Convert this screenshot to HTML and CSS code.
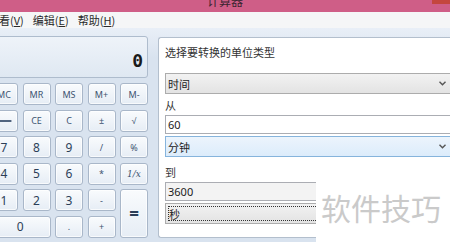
FILE: index.html
```html
<!DOCTYPE html>
<html lang="zh-CN">
<head>
  <meta charset="UTF-8" />
  <title>计算器</title>
  <link rel="stylesheet" href="styles.css">
</head>
<body>
  <div class="window">
    <div class="titlebar">
      <span class="title">计算器</span>
      <span class="close"></span>
    </div>

    <div class="menubar">
      <span class="menu-item">查看(<u>V</u>)</span>
      <span class="menu-item">编辑(<u>E</u>)</span>
      <span class="menu-item">帮助(<u>H</u>)</span>
    </div>

    <div class="main">
      <div class="calc">
        <div class="display"><span class="value">0</span></div>
        <div class="keys">
          <button class="key small">MC</button>
          <button class="key small">MR</button>
          <button class="key small">MS</button>
          <button class="key small">M+</button>
          <button class="key small">M-</button>

          <button class="key">
            <svg width="28" height="10" viewBox="0 0 28 10">
              <path d="M2 5 H22 M7 1.5 L2 5 L7 8.5" fill="none" stroke="#1d3557" stroke-width="1.6"/>
            </svg>
          </button>
          <button class="key small">CE</button>
          <button class="key small">C</button>
          <button class="key small">±</button>
          <button class="key small">√</button>

          <button class="key digit">7</button>
          <button class="key digit">8</button>
          <button class="key digit">9</button>
          <button class="key small">/</button>
          <button class="key small">%</button>

          <button class="key digit">4</button>
          <button class="key digit">5</button>
          <button class="key digit">6</button>
          <button class="key small">*</button>
          <button class="key small italic">1/x</button>

          <button class="key digit">1</button>
          <button class="key digit">2</button>
          <button class="key digit">3</button>
          <button class="key small">-</button>
          <button class="key equals">=</button>

          <button class="key digit zero">0</button>
          <button class="key small">.</button>
          <button class="key small">+</button>
        </div>
      </div>

      <div class="panel">
        <p class="panel-title">选择要转换的单位类型</p>
        <div class="select">
          <span>时间</span>
          <svg class="arrow" width="7" height="5" viewBox="0 0 7 5"><path d="M0.5 0.8 L3.5 3.8 L6.5 0.8" fill="none" stroke="#555" stroke-width="1.4"/></svg>
        </div>

        <div class="label from">从</div>
        <div class="input">60</div>
        <div class="select hover">
          <span>分钟</span>
          <svg class="arrow" width="7" height="5" viewBox="0 0 7 5"><path d="M0.5 0.8 L3.5 3.8 L6.5 0.8" fill="none" stroke="#555" stroke-width="1.4"/></svg>
        </div>

        <div class="label to">到</div>
        <div class="input readonly">3600</div>
        <div class="select focus">
          <span class="focus-ring">秒</span>
        </div>
      </div>
    </div>

    <div class="watermark">软件技巧</div>
  </div>
</body>
</html>
```

FILE: styles.css
```css
* {
  box-sizing: border-box;
}

body {
  margin: 0;
  width: 450px;
  height: 242px;
  overflow: hidden;
  font-family: "Noto Sans", "Noto Sans CJK SC", sans-serif;
  background: #dbe5f1;
}

.window {
  position: relative;
  height: 242px;
  overflow: hidden;
}

.titlebar {
  position: relative;
  height: 12px;
  background: #cf5e87;
  overflow: hidden;
  text-align: center;
}

.title {
  display: block;
  margin-top: -7px;
  font-family: "Noto Sans CJK SC", sans-serif;
  font-size: 12px;
  line-height: 16px;
  color: #3b2530;
}

.close {
  position: absolute;
  top: 0;
  right: 0;
  width: 18px;
  height: 4px;
  background: #c4463e;
}

.menubar {
  display: flex;
  gap: 9px;
  height: 16px;
  margin-left: -12px;
  background: #f5f6f7;
  font-family: "Noto Sans CJK SC", sans-serif;
  font-size: 11px;
  line-height: 16px;
  color: #2a2a2a;
}

.menu-item u {
  text-underline-offset: 1px;
}

.main {
  display: flex;
  align-items: flex-start;
  padding-top: 8px;
  height: 214px;
  background: linear-gradient(#e9eff7, #d9e3ef 30px);
}

.calc {
  width: 158px;
  margin-left: -10px;
  flex-shrink: 0;
}

.display {
  height: 42px;
  margin-bottom: 5px;
  border: 1px solid #aebccd;
  border-radius: 3px;
  background: linear-gradient(#eef3f9, #dfe8f2);
  display: flex;
  justify-content: flex-end;
  align-items: flex-end;
  padding: 0 4px 5px 0;
}

.value {
  font-family: "DejaVu Sans Mono", monospace;
  font-size: 18px;
  font-weight: bold;
  line-height: 22px;
  color: #1a1a1a;
}

.keys {
  display: grid;
  grid-template-columns: repeat(5, 28px);
  grid-auto-rows: 22px;
  column-gap: 4.5px;
  row-gap: 4.6px;
}

.key {
  display: flex;
  align-items: center;
  justify-content: center;
  margin: 0;
  padding: 0;
  border: 1px solid #a9b7c9;
  border-radius: 3px;
  background: linear-gradient(#f9fbfd, #e6edf5);
  box-shadow: inset 0 0 0 1px rgba(255, 255, 255, 0.7);
  font-family: "Noto Sans", sans-serif;
  color: #2c3f58;
  overflow: hidden;
}

.key.digit {
  font-size: 12px;
}

.key.small {
  font-size: 9px;
  color: #3d5370;
}

.key.italic {
  font-family: "DejaVu Serif", serif;
  font-style: italic;
}

.key.equals {
  grid-column: 5;
  grid-row: span 2;
  font-size: 17px;
  font-weight: bold;
}

.key.zero {
  grid-column: span 2;
}

.panel {
  flex-shrink: 0;
  width: 300px;
  height: 201px;
  margin: 1px 0 0 10px;
  padding: 8px 0 0 6px;
  background: #fff;
  border: 1px solid #b3bfcd;
  border-right: none;
  border-radius: 3px 0 0 3px;
  font-family: "Noto Sans", "Noto Sans CJK SC", sans-serif;
  font-size: 11px;
  color: #333;
}

.panel-title {
  margin: 0 0 14px;
  line-height: 13px;
}

.select {
  display: flex;
  justify-content: space-between;
  align-items: center;
  width: 286px;
  height: 21px;
  padding: 0 4px 0 2px;
  border: 1px solid #acacac;
  background: linear-gradient(#f2f2f2, #e3e3e3);
  color: #222;
}

.select.hover {
  margin-top: 2px;
  border-color: #86b4dc;
  background: linear-gradient(#ecf4fc, #dcecfb);
}

.select.focus {
  margin-top: 2px;
  padding: 2px;
}

.focus-ring {
  display: block;
  width: 100%;
  height: 100%;
  border: 1px dotted #333;
  line-height: 15px;
}

.arrow {
  display: block;
}

.label {
  line-height: 13px;
  margin-bottom: 3px;
}

.label.from {
  margin-top: 5px;
}

.label.to {
  margin-top: 9px;
}

.input {
  display: flex;
  align-items: center;
  width: 286px;
  height: 19px;
  padding-left: 2px;
  border: 1px solid #abadb3;
  background: #fff;
  color: #222;
}

.input.readonly {
  background: #f3f3f3;
}

.watermark {
  position: absolute;
  left: 316px;
  top: 178px;
  width: 134px;
  height: 64px;
  padding: 12px 0 0 5px;
  background: #fff;
  font-family: "Noto Sans CJK SC", sans-serif;
  font-size: 30px;
  line-height: 34px;
  color: #cacaca;
  white-space: nowrap;
}
```
